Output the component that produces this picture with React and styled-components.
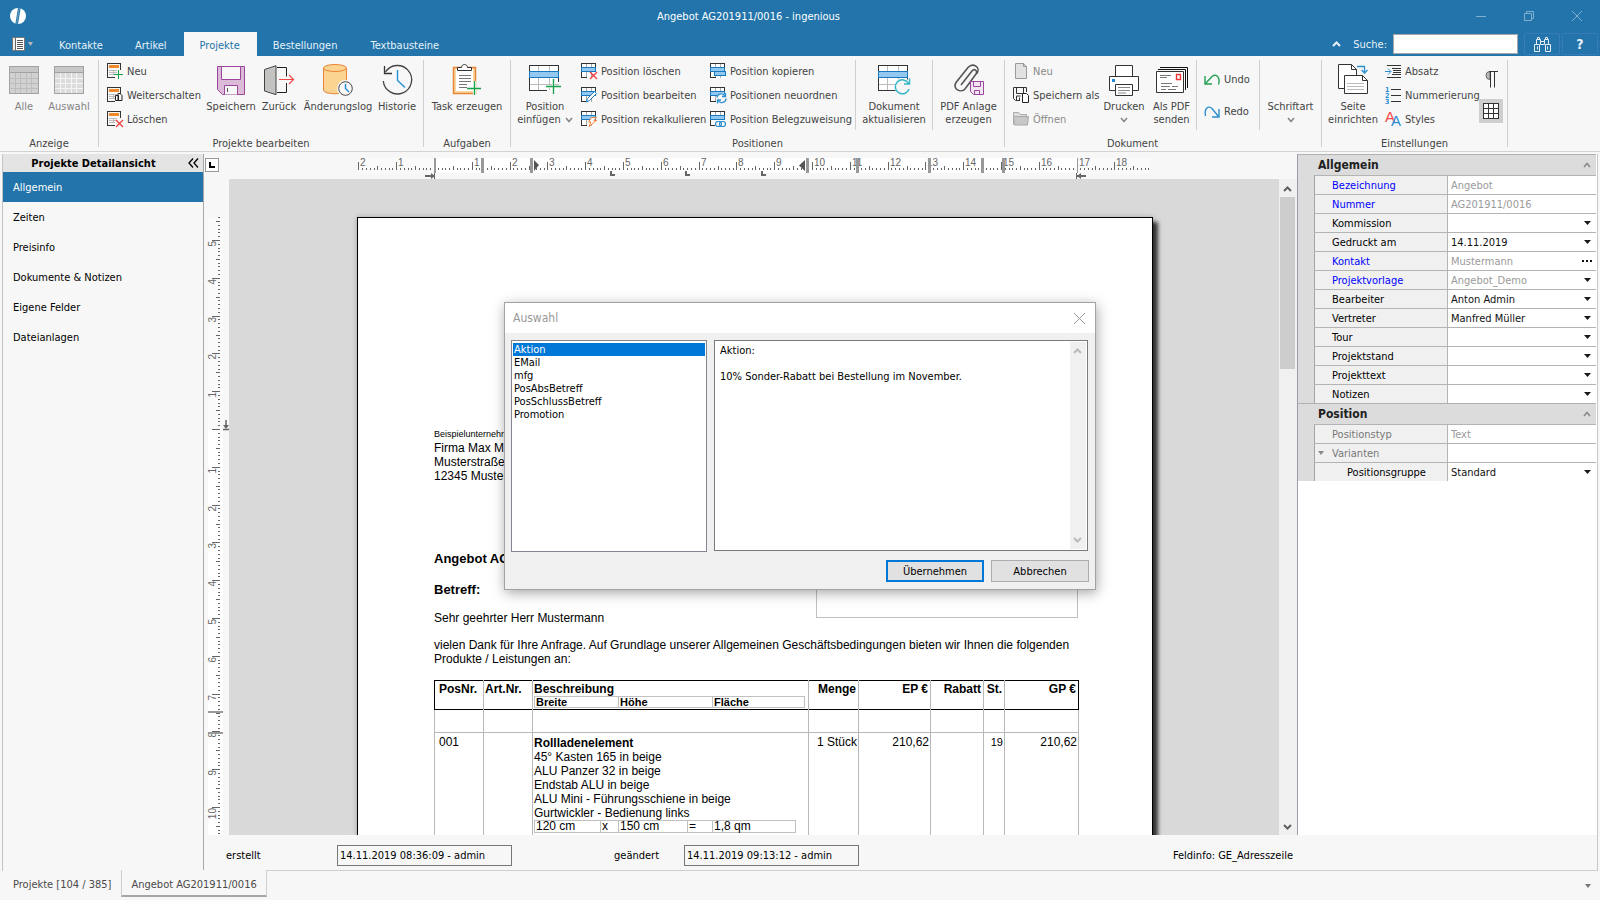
import React from "react";
import styled, { createGlobalStyle } from "styled-components";

const GlobalStyle = createGlobalStyle`
  * {
    box-sizing: border-box;
  }

  body {
    margin: 0;
    background: #f7f7f7;
  }

  body,
  button,
  input,
  select,
  textarea {
    font-family: "DejaVu Sans Condensed", "Noto Sans", sans-serif;
    font-size: 11px;
  }

  button {
    border: 0;
    padding: 0;
    background: none;
    color: inherit;
  }

  svg {
    display: block;
    flex: none;
    overflow: visible;
  }
`;

const Window = styled.div`
  display: flex;
  flex-direction: column;
  height: 100vh;
  overflow: hidden;
  color: #000;
`;

/* ---------- title bar and ribbon tabs ---------- */

const TitleBar = styled.header`
  display: flex;
  align-items: center;
  height: 32px;
  padding: 0 13px 0 10px;
  background: #2274aa;
  color: #fff;

  h1 {
    flex: 1;
    margin: 0;
    padding-left: 28px;
    font-size: 11px;
    font-weight: normal;
    text-align: center;
  }
`;

const WindowButton = styled.button`
  display: grid;
  place-items: center;
  width: 20px;
  height: 20px;
  margin-left: 28px;
  color: #7fb0d0;
`;

const TabBar = styled.nav`
  display: flex;
  align-items: stretch;
  height: 24px;
  padding-right: 2px;
  background: #2274aa;
  color: #fff;
`;

const FileMenu = styled.button`
  display: flex;
  align-items: center;
  gap: 3px;
  width: 43px;
  padding-left: 12px;
`;

const Tab = styled.button`
  padding: 2px 16px 0;
  background: ${(props) => (props.$active ? "#f7f7f7" : "none")};
  color: ${(props) => (props.$active ? "#2274aa" : "#e8f2f8")};

  & + & {
    padding-right: 17px;
  }
`;

const Search = styled.div`
  display: flex;
  align-items: center;
  margin-left: auto;
  color: #e8f2f8;

  label {
    margin: 0 6px 0 12px;
  }

  input {
    width: 125px;
    height: 20px;
    margin-right: 4px;
    border: 1px solid #a8a8a8;
    background: #fff;
  }
`;

const SearchButton = styled.button`
  display: grid;
  place-items: center;
  width: 36px;
  height: 22px;
  margin-left: 2px;
  border: 1px solid #3a7cb8;
  border-radius: 2px;
  font-size: 14px;
  font-weight: bold;
`;

/* ---------- ribbon ---------- */

const Ribbon = styled.div`
  display: flex;
  height: 96px;
  padding-top: 4px;
  border-bottom: 1px solid #d2d2d2;
  background: #f7f7f7;
  color: #444;
`;

const Group = styled.section`
  display: flex;
  flex-direction: column;

  h2 {
    margin: 0;
    font-size: 11px;
    font-weight: normal;
    line-height: 14px;
    text-align: center;
  }
`;

const GroupBody = styled.div`
  display: flex;
  height: 77px;
  padding: 0 ${(props) => props.$end || 0}px 0 ${(props) => props.$start || 0}px;
`;

const Rule = styled.div`
  flex: none;
  width: 1px;
  height: ${(props) => (props.$short ? 70 : 87)}px;
  background: #d0d0d0;
`;

const LargeButton = styled.button`
  display: flex;
  flex-direction: column;
  align-items: center;
  flex: none;
  width: ${(props) => props.$width}px;
  padding-top: 4px;
  line-height: 13px;
  white-space: nowrap;
  opacity: ${(props) => (props.disabled ? 0.65 : 1)};

  .picture {
    display: grid;
    place-items: center;
    height: 32px;
    margin-bottom: 4px;
  }

  .line {
    display: flex;
    align-items: center;
    gap: 4px;
    min-height: 13px;
  }

  .line svg {
    color: #888;
  }
`;

const Stack = styled.div`
  display: flex;
  flex-direction: column;
  gap: ${(props) => props.$gap || 2}px;
  flex: none;
  width: ${(props) => props.$width}px;
  padding-left: ${(props) => props.$start || 0}px;
  padding-top: ${(props) => props.$top || 0}px;
`;

const SmallButton = styled.button`
  display: flex;
  align-items: center;
  gap: 4px;
  height: 22px;
  white-space: nowrap;
  color: ${(props) => (props.disabled ? "#8a8a8a" : "inherit")};
`;

const ToggleButton = styled.button`
  display: grid;
  place-items: center;
  width: 24px;
  height: 24px;
  background: ${(props) => (props.$on ? "#cfcfcf" : "none")};
`;

/* ---------- work area ---------- */

const Workspace = styled.main`
  display: flex;
  flex: 1;
  min-height: 0;
  padding: 2px 2px 0 2px;
`;

const Sidebar = styled.aside`
  flex: none;
  width: 202px;
  border-left: 1px solid #c4c4c4;
  border-right: 1px solid #a8a8a8;

  header {
    display: flex;
    align-items: center;
    height: 18px;
    padding-right: 4px;
    background: #e4e4e4;
  }

  h2 {
    flex: 1;
    margin: 0;
    padding-right: 4px;
    font-size: 11px;
    text-align: center;
  }
`;

const SideItem = styled.button`
  display: block;
  width: 100%;
  height: 30px;
  padding-left: 10px;
  text-align: left;
  background: ${(props) => (props.$active ? "#2274aa" : "none")};
  color: ${(props) => (props.$active ? "#fff" : "#000")};
`;

const Content = styled.div`
  display: flex;
  flex: 1;
  flex-direction: column;
  min-width: 0;
  border-right: 1px solid #c8c8c8;
`;

const Panels = styled.div`
  display: flex;
  flex: 1;
  min-height: 0;
`;

const Editor = styled.section`
  display: grid;
  grid-template-columns: 25px 1fr 18px;
  grid-template-rows: 25px 1fr;
  flex: 1;
  min-width: 0;
  border-right: 1px solid #9a9eaa;
`;

const TabCorner = styled.button`
  display: grid;
  place-items: center;
  width: 14px;
  height: 14px;
  margin: 4px 0 0 1px;
  border: 1px solid #999;
  background: #fff;
`;

const TopRuler = styled.div`
  display: flex;
  justify-content: center;
  grid-column: 2 / 4;
  padding-right: 18px;
  overflow: hidden;
`;

const SideRuler = styled.div`
  padding-top: 38px;
  overflow: hidden;
`;

const Canvas = styled.div`
  display: flex;
  justify-content: center;
  align-items: flex-start;
  padding: 38px 0 0 2px;
  overflow: hidden;
  background: #d9d9d9;
`;

const Scrollbar = styled.div`
  display: flex;
  flex-direction: column;
  align-items: center;
  justify-content: space-between;
  width: ${(props) => (props.$slim ? 16 : 18)}px;
  padding: ${(props) => (props.$slim ? "1px 2px 1px 0" : "2px 2px 0 1px")};
  background: #f0f0f0;

  button {
    display: grid;
    place-items: center;
    width: 100%;
    height: 16px;
    color: ${(props) => (props.$slim ? "#bbb" : "#606060")};
  }

  .thumb {
    width: 100%;
    height: 172px;
    margin-bottom: auto;
    background: #cdcdcd;
  }
`;

const StatusRow = styled.footer`
  display: flex;
  align-items: center;
  height: 36px;
  padding: 5px 304px 0 22px;
  border-bottom: 1px solid #cfcfcf;

  label {
    width: 111px;
  }

  input {
    width: 175px;
    height: 21px;
    margin-right: 102px;
    padding: 0 2px;
    border: 1px solid #777;
    background: #f7f7f7;
  }

  label + input + label {
    width: 70px;
  }

  output {
    margin-left: auto;
  }
`;

/* ---------- document sheet ---------- */

const Sheet = styled.article`
  flex: none;
  width: 796px;
  min-height: 1123px;
  padding: 209px 74px 0 76px;
  border: 1px solid #000;
  background: #fff;
  box-shadow:
    5px 5px 4px rgba(0, 0, 0, 0.75),
    0 0 5px rgba(0, 0, 0, 0.25);
  font-family: "Liberation Sans", Arial, sans-serif;
  font-size: 12px;
  line-height: 14px;

  p {
    margin: 0;
  }

  .sender {
    font-size: 9px;
  }
`;

const LetterHead = styled.div`
  display: grid;
  grid-template-columns: 1fr 262px;
  align-items: end;
  margin: 68px 0 13px;

  h3 {
    margin: 0 0 15px;
    font-size: 13px;
    line-height: 16px;
  }

  h3 + h3 {
    margin-bottom: 13px;
  }
`;

const InfoBox = styled.div`
  height: 60px;
  margin-bottom: 7px;
  border: 1px solid #c0c0c0;
`;

const Positions = styled.table`
  width: 100%;
  margin-top: 14px;
  table-layout: fixed;
  border-collapse: collapse;

  > thead {
    border: 1px solid #000;
  }

  > thead > tr > th,
  > tbody > tr > td {
    padding: 1px 2px 1px 1px;
    border-left: 1px solid #b8b8b8;
    border-right: 1px solid #b8b8b8;
    vertical-align: top;
    text-align: left;
    white-space: nowrap;
  }

  > thead > tr > th:first-child,
  > tbody > tr > td:first-child {
    padding-left: 4px;
  }

  > thead > tr > th:first-child {
    border-left-color: #000;
  }

  > thead > tr > th:last-child {
    border-right-color: #000;
  }

  > thead > tr > th:nth-child(n + 4),
  > tbody > tr > td:nth-child(n + 4) {
    text-align: right;
  }

  > tbody > tr > td {
    padding-top: 2px;
    padding-right: 1px;
  }

  .spacer td {
    height: 23px;
    border-bottom: 1px solid #b8b8b8;
  }

  .item {
    height: 320px;
  }

  .tax {
    font-size: 11px;
  }

  strong {
    display: block;
    padding-top: 1px;
  }
`;

const Measures = styled.table`
  width: ${(props) => props.$width}px;
  table-layout: fixed;
  border-collapse: collapse;
  line-height: 11px;

  th,
  td {
    padding: 0 1px;
    border: 1px solid #c0c0c0;
    text-align: left;
  }

  th {
    border-right: 0;
    font-size: 11px;
    line-height: 10px;
  }

  th:last-child {
    border-right: 1px solid #c0c0c0;
  }
`;

/* ---------- property panel ---------- */

const Properties = styled.aside`
  flex: none;
  width: 299px;
  padding-right: 1px;
  background: #fff;
`;

const PropertyGroup = styled.section`
  padding-left: 16px;
  border-top: 1px solid #b0b0b0;
  background: #dcdcdc;

  header {
    display: flex;
    align-items: center;
    justify-content: space-between;
    height: 20px;
    padding: 0 5px 0 4px;
    color: #8a8a8a;
  }

  h2 {
    margin: 0;
    font-size: 12px;
    color: #222;
  }
`;

const PropertyRow = styled.div`
  display: grid;
  grid-template-columns: 132px 1fr;
  height: 19px;
  border-top: 1px solid #b4b4b4;
  border-left: 1px solid #a4a4a4;
  color: ${(props) => props.$tone || "#000"};

  label {
    display: flex;
    align-items: center;
    padding-left: ${(props) => (props.$nested ? 32 : 17)}px;
    background: #f0f0f0;
  }

  label svg {
    margin: 0 8px 0 -14px;
  }
`;

const Field = styled.div`
  display: grid;
  grid-template-columns: 1fr 18px;
  align-items: center;
  border-left: 1px solid #b4b4b4;
  background: #fff;

  input,
  select {
    grid-area: 1 / 1 / 2 / 3;
    width: 100%;
    height: 17px;
    padding: 0 3px;
    border: 0;
    background: none;
    appearance: none;
    color: ${(props) => (props.$muted ? "#9a9a9a" : "#111")};
    opacity: 1;
  }

  button,
  svg {
    grid-area: 1 / 2;
    justify-self: center;
    pointer-events: none;
  }
`;

/* ---------- dialog ---------- */

const Dialog = styled.div`
  position: absolute;
  top: 302px;
  left: 504px;
  width: 592px;
  border: 1px solid #a2a2a2;
  background: #f0f0f0;
  box-shadow: 1px 3px 12px rgba(0, 0, 0, 0.35);

  header {
    display: flex;
    align-items: center;
    justify-content: space-between;
    height: 30px;
    padding: 0 10px 0 8px;
    background: #fff;
    color: #999;
  }

  h2 {
    margin: 0;
    font-size: 12px;
    font-weight: normal;
  }
`;

const DialogBody = styled.div`
  display: grid;
  grid-template-columns: 196px 1fr;
  gap: 7px;
  height: 212px;
  margin: 7px 7px 0 6px;
`;

const TextList = styled.ul`
  margin: 0;
  padding: 2px 1px;
  border: 1px solid #828790;
  background: #fff;
  list-style: none;

  li {
    height: 13px;
    padding-left: 1px;
    line-height: 13px;
  }

  li[aria-selected="true"] {
    background: #0078d7;
    color: #fff;
  }
`;

const Preview = styled.div`
  display: flex;
  height: 211px;
  padding: 1px;
  border: 1px solid #7a7a7a;
  background: #fff;

  textarea {
    flex: 1;
    padding: 2px 4px;
    border: 0;
    outline: 0;
    resize: none;
    line-height: 13px;
  }
`;

const DialogActions = styled.div`
  display: flex;
  justify-content: flex-end;
  gap: 7px;
  padding: 8px 6px 7px;

  button {
    width: 98px;
    height: 22px;
    border: 1px solid #adadad;
    background: #e1e1e1;
  }

  button:first-child {
    border: 2px solid #0078d7;
  }
`;

/* ---------- bottom tabs ---------- */

const BottomTabs = styled.nav`
  display: flex;
  align-items: flex-start;
  height: 29px;
  padding: 0 9px 0 3px;
  color: #4a4a4a;

  svg {
    margin: 13px 0 0 auto;
  }
`;

const BottomTab = styled.button`
  height: 27px;
  margin-top: -1px;
  padding: 4px 9px 0;
  border: 1px solid ${(props) => (props.$active ? "#cfcfcf" : "transparent")};
  border-top: 0;
  border-bottom: 2px solid ${(props) => (props.$active ? "#a6a6a6" : "transparent")};
  background: ${(props) => (props.$active ? "#f7f7f7" : "none")};
`;

/* ---------- icons ---------- */

const Svg = ({ w = 16, h = w, children, ...rest }) => (
  <svg
    width={w}
    height={h}
    viewBox={`0 0 ${w} ${h}`}
    fill="none"
    aria-hidden="true"
    {...rest}
  >
    {children}
  </svg>
);

const Caret = ({ color = "#1a1a1a", w = 7 }) => (
  <Svg w={w} h={4}>
    <path d={`M0 0H${w}L${w / 2} 4Z`} fill={color} />
  </Svg>
);

const Chevron = ({ up, w = 8, width = 1.6 }) => (
  <Svg w={w} h={6}>
    <path
      d={up ? `M1 5L${w / 2} 1.5L${w - 1} 5` : `M1 1L${w / 2} 4.5L${w - 1} 1`}
      stroke="currentColor"
      strokeWidth={width}
    />
  </Svg>
);

const Cross = ({ size = 10 }) => (
  <Svg w={size}>
    <path d={`M0 0L${size} ${size}M${size} 0L0 ${size}`} stroke="currentColor" />
  </Svg>
);

const Logo = () => (
  <Svg>
    <circle cx="8" cy="8" r="8" fill="#fff" />
    <path d="M9.500 -1L6.500 17" stroke="#2274aa" strokeWidth="2.600" />
    <path d="M9.300 0L6.700 16" stroke="#8fb9d4" strokeWidth=".6" />
  </Svg>
);

const FileIcon = () => (
  <Svg w={13} h={14}>
    <path d="M.5.500h12v13H.5z" fill="#666" stroke="#777" />
    <path d="M4 1h8v12H4z" fill="#fff" />
    <path d="M2 1v12" stroke="#eee" strokeWidth="2" />
    <path d="M5 3.500h6M5 5.500h6M5 7.500h6M5 9.500h6M5 11.500h6" stroke="#555" />
  </Svg>
);

const Binoculars = () => (
  <Svg w={17} h={17}>
    <path
      d="M.5 8.500h5v7h-5zM11.500 8.500h5v7h-5zM2.500 8.500v-5h4v5h4v-5h4v5M3.500 3.500v-2h2v2M11.500 3.500v-2h2v2M6.500 5.500h4M3.500 10.500v3M13.500 10.500v3"
      stroke="#e6eef4"
    />
  </Svg>
);

const GrayGrid = ({ light }) => (
  <Svg w={30} h={28} shapeRendering="crispEdges">
    <path d="M.5.500h29v27H.5z" fill={light ? "#cfcfcf" : "#bdbdbd"} />
    <path d="M1 1h28v6H1z" fill="#b0b0b0" />
    <path
      d="M1 12.500h28M1 17.500h28M1 22.500h28M6.500 7v20M11.500 7v20M17.500 7v20M22.500 7v20"
      stroke={light ? "#f4f4f4" : "#9d9d9d"}
    />
    <path d="M.5.500h29v27H.5zM1 6.500h28" stroke="#767676" />
  </Svg>
);

const FormBase = () => (
  <g shapeRendering="crispEdges">
    <path d="M8 14.500H.5v-14h13V7" stroke="#333" />
    <path d="M2 2h10v3H2z" fill="#f08a28" />
    <path d="M2 7.500h8M2 9.500h8M2 11.500h6M6.500 7v5" stroke="#bbb" />
  </g>
);

const FormNew = () => (
  <Svg>
    <FormBase />
    <path d="M11.500 7v9M7 11.500h9" stroke="#16a34a" shapeRendering="crispEdges" />
  </Svg>
);

const FormForward = () => (
  <Svg>
    <FormBase />
    <path d="M8.500 8.500h3v5h-3zM11 6.500h2l2 2v5h-4z" fill="#f7f7f7" stroke="#222" />
  </Svg>
);

const FormDelete = () => (
  <Svg>
    <FormBase />
    <path d="M9 9l7 7M16 9l-7 7" stroke="#f04040" strokeWidth="1.300" />
  </Svg>
);

const SaveLarge = () => (
  <Svg w={29} h={29}>
    <path d="M.5.500h27v28H5.500l-5-5z" fill="#dcbbd9" stroke="#9c479c" />
    <path d="M4.500.500h19v13h-19zM7.500 28.500v-9h13v9" fill="#f7f7f7" stroke="#9c479c" />
    <path d="M10.500 22v4" stroke="#555" />
  </Svg>
);

const BackIcon = () => (
  <Svg w={30} h={30}>
    <path d="M.5 4.500L12 .7v29L.5 26z" fill="#c3c3c1" stroke="#444" />
    <path d="M13 2.500h9.500v9M22.500 18v9.500H13" stroke="#222" />
    <path d="M15 14.500h14M25 10l4.500 4.500L25 19" stroke="#f04848" strokeWidth="1.200" />
  </Svg>
);

const ChangeLog = () => (
  <Svg w={30} h={32}>
    <path d="M.5 4v22c0 5 23 5 23 0V4" fill="#fbd491" stroke="#e8853a" />
    <ellipse cx="12" cy="4" rx="11.500" ry="3.500" fill="#fbd491" stroke="#e8853a" />
    <circle cx="22.500" cy="24.500" r="8.500" fill="#f7f7f7" />
    <circle cx="22.500" cy="24.500" r="6.800" stroke="#444" />
    <path d="M22.500 20V24.500l3.500 3.500" stroke="#1e88d0" strokeWidth="1.400" />
  </Svg>
);

const History = () => (
  <Svg w={31} h={31}>
    <path d="M3.500 7A14.200 14.200 0 1 1 1.300 16" stroke="#444" strokeWidth="1.300" />
    <path d="M2.500 1v7.500H10" stroke="#333" strokeWidth="1.300" />
    <path d="M15.500 5v10.500l7.500 7" stroke="#2090d8" strokeWidth="1.400" />
  </Svg>
);

const TaskIcon = () => (
  <Svg w={30} h={32}>
    <path d="M1.500 3.500h22v26h-22z" fill="#fbd9a0" stroke="#e8853a" strokeWidth="1.500" />
    <path d="M4 5h17v22H4z" fill="#fff" />
    <path d="M5.500 6.500v-3h4c0-4 6-4 6 0h4v3z" fill="#fff" stroke="#333" />
    <path d="M7 11.500h12M7 14.500h12M7 17.500h12M7 20.500h8M7 23.500h11" stroke="#777" />
    <path d="M22.500 17v14M15 24.500h14" stroke="#f7f7f7" strokeWidth="3" />
    <path d="M22.500 17v14M15 24.500h14" stroke="#16a34a" strokeWidth="1.300" />
  </Svg>
);

const LargeTable = ({ children }) => (
  <Svg w={33} h={30}>
    <g shapeRendering="crispEdges">
      <path d="M.5.500h29v25H.5z" fill="#fff" />
      <path d="M9.500 1v24M20.500 1v24M1 19.500h29" stroke="#bcbcbc" />
      <path d="M30 .5H.5v25H18M29.500.500V17" stroke="#333" />
      <path d="M.5 6.500h29v6H.5z" fill="#93c9f0" stroke="#1878c0" />
    </g>
    {children}
  </Svg>
);

const InsertPosition = () => (
  <LargeTable>
    <path d="M24.500 14v15M17 21.500h15" stroke="#f7f7f7" strokeWidth="3" />
    <path d="M24.500 14v15M17 21.500h15" stroke="#16a34a" strokeWidth="1.300" />
  </LargeTable>
);

const RefreshDocument = () => (
  <LargeTable>
    <circle cx="25" cy="21.500" r="8.500" fill="#f7f7f7" />
    <path
      d="M30.500 18.500A7 7 0 1 0 31 24M31.500 13.500v5.500H26"
      stroke="#35b5c8"
      strokeWidth="1.500"
    />
  </LargeTable>
);

const smallBadges = {
  delete: <path d="M9 9l7 7M16 9l-7 7" stroke="#f04040" strokeWidth="1.400" />,
  edit: <path d="M5.500 15l1-3.500 7-7 2 2-7 7z" fill="#fff" stroke="#1e7fc8" />,
  recalc: (
    <path d="M10.500 6.500h5l-2.500 3h2.500l-7.500 6 2-4.500H7.500z" fill="#fff" stroke="#f08030" />
  ),
  copy: (
    <path
      d="M4.500 8.500h11v4h-11z"
      fill="#93c9f0"
      stroke="#1878c0"
      shapeRendering="crispEdges"
    />
  ),
  reorder: (
    <g stroke="#2a8fd0" strokeWidth="1.300">
      <circle cx="11.500" cy="11" r="5" fill="#f7f7f7" stroke="none" />
      <path d="M7 10.500a4.300 4.300 0 0 1 8-1.500M16 11.500a4.300 4.300 0 0 1-8 2M15.500 6v3.500H12M7.500 16.500V13H11" />
    </g>
  ),
  assign: (
    <g stroke="#2a8fd0" strokeWidth="1.200">
      <path d="M5 9h11v7H5z" fill="#f7f7f7" stroke="none" />
      <rect x="5.500" y="10.500" width="6" height="5" rx="2.500" />
      <rect x="9.500" y="10.500" width="6" height="5" rx="2.500" />
    </g>
  ),
};

const SmallTable = ({ badge }) => (
  <Svg>
    <g shapeRendering="crispEdges">
      <path d="M.5.500h14v14H.5z" fill="#fff" />
      <path d="M5.500 1v14M10.500 1v14" stroke="#aaa" />
      <path d="M15 .5H.5v14H6M14.500.500V8" stroke="#333" />
      <path d="M.5 4.500h14v4H.5z" fill="#93c9f0" stroke="#1878c0" />
    </g>
    {smallBadges[badge]}
  </Svg>
);

const PdfAttach = () => (
  <Svg w={32} h={32}>
    <path
      d="M8 21L19 7c2.500-3 6 0 4 3L12 25c-4 4.500-13 0-9-6.500L15 3.500c5-5.500 13 0 9 6"
      stroke="#555"
      strokeWidth="1.600"
    />
    <path d="M17.500 17.500h13v13h-10l-3-3z" fill="#f3e6f3" stroke="#9c479c" />
    <path d="M20.500 17.500h7v5h-7zM21.500 30.500v-4h5v4" stroke="#9c479c" />
  </Svg>
);

const PageIcon = () => (
  <Svg>
    <path d="M2.500.500h8l3 3v12h-11z" fill="#e2e2e2" stroke="#999" />
    <path d="M10.500.500v3h3" stroke="#999" />
  </Svg>
);

const SaveAs = () => (
  <Svg>
    <path
      d="M7 13.500H2.500l-2-2V.5h13V5M3.500.500v6h7v-6M3.500 13v-4h4M6.500 10.500v3"
      stroke="#333"
    />
    <path d="M9.500 6.500h4l2 2v7h-6z" fill="#fff" stroke="#222" />
  </Svg>
);

const FolderIcon = () => (
  <Svg>
    <path d="M.5 13.500v-12h5l2 2h6v2" fill="#ddd" stroke="#aaa" />
    <path d="M.5 5.500h15l-1 8.500h-13z" fill="#c8c8c8" stroke="#aaa" />
  </Svg>
);

const PrinterIcon = () => (
  <Svg w={30} h={31}>
    <path d="M6.500 12V.5h17V12" fill="#fff" stroke="#333" />
    <path d="M.5 11.500h29v14H.5z" fill="#fff" stroke="#333" />
    <path d="M6.500 19.500h17v11h-17z" fill="#fff" stroke="#333" />
    <path d="M9 22.500h12M9 25.500h12M9 28h8" stroke="#888" />
    <path d="M3 14h3v3H3z" fill="#1e88d0" />
  </Svg>
);

const MailPdf = () => (
  <Svg w={32} h={26}>
    <path d="M4 .5h27.500V21M2 2.500h27.500V23" stroke="#111" />
    <path d="M.5 4.500h27v21H.5z" fill="#fff" stroke="#333" />
    <path d="M20.500 7.500h4v5h-4z" stroke="#f03838" strokeWidth="1.400" />
    <path
      d="M4 8.500h11M4 10.500h7M5 16.500h11M5 19.500h9M16 19.500h6M5 22.500h5M12 22.500h8"
      stroke="#777"
    />
  </Svg>
);

const Undo = () => (
  <Svg>
    <path d="M1 5v8h7" stroke="#22a052" strokeWidth="1.400" />
    <path d="M1.500 12.500L8 5.500c5-3.500 8.500 2 6.500 8" stroke="#22a052" strokeWidth="1.400" />
  </Svg>
);

const Redo = () => (
  <Svg>
    <path d="M15 6v8H8" stroke="#2a8fd0" strokeWidth="1.400" />
    <path d="M14.500 13.500L8 5.500c-4-3.500-8 .5-6.500 7.500" stroke="#2a8fd0" strokeWidth="1.400" />
  </Svg>
);

const PageSetup = () => (
  <Svg w={31} h={32}>
    <path d="M6 24.500H.5V.5h13l5 5V11" fill="#fff" stroke="#333" />
    <path d="M13.500.500v5h5" stroke="#333" />
    <path d="M6.500 11.500h18l5 5v13h-23z" fill="#fff" stroke="#333" />
    <path d="M24.500 11.500v5h5" stroke="#333" />
    <path d="M9 19.500h17M9 22.500h17M9 25.500h17" stroke="#bbb" />
    <path d="M19 2.500h7.500V9M23.500 6l3 3 3-3" stroke="#2a8fd0" strokeWidth="1.300" />
  </Svg>
);

const Paragraph = () => (
  <Svg>
    <path
      d="M2 2.500h14M7 5.500h9M8 7.500h8M8 9.500h8M7 11.500h9M2 14.500h14"
      stroke="#333"
    />
    <path d="M0 8.500h5.500M3 5.500l3 3-3 3" stroke="#2a8fd0" />
  </Svg>
);

const Numbering = () => (
  <Svg>
    <path d="M6 2.500h10M6 8.500h10M6 14.500h10" stroke="#333" />
    <g fill="#2a8fd0" fontSize="7" fontWeight="bold">
      <text x="0" y="5">
        1
      </text>
      <text x="0" y="11">
        2
      </text>
      <text x="0" y="17">
        3
      </text>
    </g>
  </Svg>
);

const Styles = () => (
  <Svg>
    <g fontFamily="Liberation Sans" fontSize="15">
      <text x="0" y="11" fill="#f04848">
        A
      </text>
      <text x="6" y="15" fill="#2a8fd0">
        A
      </text>
    </g>
  </Svg>
);

const Pilcrow = () => (
  <Svg w={13} h={17}>
    <path d="M5 .5a4 4 0 0 0 0 8z" fill="#bbb" stroke="#666" />
    <path d="M4 .5h9M5.500.500v16M9.500.500v16" stroke="#333" />
  </Svg>
);

const GridIcon = () => (
  <Svg>
    <path
      d="M.5.500h15v15H.5zM5.500 1v14M10.500 1v14M1 5.500h14M1 10.500h14"
      fill="#fff"
      stroke="#333"
      shapeRendering="crispEdges"
    />
  </Svg>
);

/* ---------- rulers ---------- */

const CM = 37.8;

const rulerTicks = (from, to) => {
  const ticks = [];
  for (let mm = from; mm <= to; mm += 1) {
    const size = mm % 10 === 0 ? 8 : mm % 5 === 0 ? 4 : 2;
    ticks.push({ mm, size });
  }
  return ticks;
};

const HorizontalRuler = () => {
  const zero = 77;
  const at = (mm) => Math.round(zero + (mm * CM) / 10);
  return (
    <Svg w={794} h={25}>
      <path d="M0 4h794v15H0z" fill="#fafafa" />
      <path d="M77 4h643v15H77z" fill="#fff" />
      <g shapeRendering="crispEdges" fill="#666">
        {rulerTicks(-20, 189).map(({ mm, size }) => (
          <rect key={mm} x={at(mm)} y={16 - size} width="1" height={size} />
        ))}
      </g>
      <g fill="#666" fontFamily="Liberation Sans" fontSize="10">
        {[-2, -1, 1, 2, 3, 4, 5, 6, 7, 8, 9, 10, 11, 12, 13, 14, 15, 16, 17, 18].map(
          (n) => (
            <text key={n} x={at(n * 10) + 2} y="12">
              {Math.abs(n)}
            </text>
          )
        )}
      </g>
      <g fill="#999" shapeRendering="crispEdges">
        <path d="M77 4h2v15h-2zM720 4h1v15h-1z" />
        {[125, 174, 450, 500, 572, 625, 646].map((x) => (
          <rect key={x} x={x - 1} y="4" width="3" height="15" />
        ))}
      </g>
      <path d="M177 6l5 5h-5zM177 11h5l-5 6zM448 6v11l-6-5.500z" fill="#555" />
      <path
        d="M254 17v4h4M329 17v4h4M405 17v4h4M68 22h8M720 22h9"
        stroke="#666"
        strokeWidth="2"
      />
      <path d="M74 19l4 3-4 3zM724 19l-4 3 4 3z" fill="#666" />
      <path d="M77.500 19v6M719.500 19v6" stroke="#666" />
    </Svg>
  );
};

const VerticalRuler = () => {
  const zero = 212;
  const at = (mm) => Math.round(zero + (mm * CM) / 10);
  return (
    <Svg w={25} h={640}>
      <path d="M4 1h15v640H4z" fill="#fafafa" />
      <path d="M4 212h15v428H4z" fill="#fff" />
      <g shapeRendering="crispEdges" fill="#666">
        {rulerTicks(-56, 112).map(({ mm, size }) => (
          <rect key={mm} x={16 - size} y={at(mm)} width={size} height="1" />
        ))}
      </g>
      <g fill="#666" fontFamily="Liberation Sans" fontSize="10">
        {[-5, -4, -3, -2, -1, 1, 2, 3, 4, 5, 6, 7, 8, 9, 10].map((n) => (
          <text
            key={n}
            transform={`translate(12 ${at(n * 10) + 1}) rotate(-90)`}
            textAnchor="end"
          >
            {Math.abs(n)}
          </text>
        ))}
      </g>
      <path d="M4 494h15v2H4zM4 515h15v2H4z" fill="#999" />
      <path d="M19 212.500h6M22 203v7" stroke="#666" strokeWidth="1.500" />
      <path d="M19 208h6l-3 4z" fill="#666" />
    </Svg>
  );
};

/* ---------- data ---------- */

const LINK = "#0000ff";
const GRAY = "#777";

const generalFields = [
  { label: "Bezeichnung", value: "Angebot", tone: LINK, muted: true },
  { label: "Nummer", value: "AG201911/0016", tone: LINK, muted: true },
  { label: "Kommission", kind: "select" },
  { label: "Gedruckt am", value: "14.11.2019", kind: "select" },
  { label: "Kontakt", value: "Mustermann", tone: LINK, muted: true, kind: "browse" },
  { label: "Projektvorlage", value: "Angebot_Demo", tone: LINK, muted: true, kind: "select" },
  { label: "Bearbeiter", value: "Anton Admin", kind: "select" },
  { label: "Vertreter", value: "Manfred Müller", kind: "select" },
  { label: "Tour", kind: "select" },
  { label: "Projektstand", kind: "select" },
  { label: "Projekttext", kind: "select" },
  { label: "Notizen", kind: "select" },
];

const positionFields = [
  { label: "Positionstyp", value: "Text", tone: GRAY, muted: true },
  { label: "Varianten", tone: GRAY, open: true },
  { label: "Positionsgruppe", value: "Standard", kind: "select", nested: true },
];

const textBlocks = [
  "Aktion",
  "EMail",
  "mfg",
  "PosAbsBetreff",
  "PosSchlussBetreff",
  "Promotion",
];

/* ---------- parts ---------- */

function Large({ icon, lines, width, menu, disabled }) {
  return (
    <LargeButton $width={width} disabled={disabled}>
      <span className="picture">{icon}</span>
      {lines.map((line, index) => (
        <span className="line" key={line}>
          {line}
          {menu === "inline" && index === lines.length - 1 && <Chevron />}
        </span>
      ))}
      {menu === "below" && (
        <span className="line">
          <Chevron />
        </span>
      )}
    </LargeButton>
  );
}

function Small({ icon, children, disabled }) {
  return (
    <SmallButton disabled={disabled}>
      {icon}
      {children}
    </SmallButton>
  );
}

function RibbonBar() {
  return (
    <Ribbon>
      <Group>
        <GroupBody $start={2} $end={6}>
          <Large icon={<GrayGrid />} lines={["Alle"]} width={44} disabled />
          <Large icon={<GrayGrid light />} lines={["Auswahl"]} width={46} disabled />
        </GroupBody>
        <h2>Anzeige</h2>
      </Group>
      <Rule />
      <Group>
        <GroupBody $end={3}>
          <Stack $width={107} $start={8}>
            <Small icon={<FormNew />}>Neu</Small>
            <Small icon={<FormForward />}>Weiterschalten</Small>
            <Small icon={<FormDelete />}>Löschen</Small>
          </Stack>
          <Large icon={<SaveLarge />} lines={["Speichern"]} width={50} />
          <Large icon={<BackIcon />} lines={["Zurück"]} width={46} />
          <Large icon={<ChangeLog />} lines={["Änderungslog"]} width={72} />
          <Large icon={<History />} lines={["Historie"]} width={46} />
        </GroupBody>
        <h2>Projekte bearbeiten</h2>
      </Group>
      <Rule />
      <Group>
        <GroupBody>
          <Large icon={<TaskIcon />} lines={["Task erzeugen"]} width={86} />
        </GroupBody>
        <h2>Aufgaben</h2>
      </Group>
      <Rule />
      <Group>
        <GroupBody>
          <Large
            icon={<InsertPosition />}
            lines={["Position", "einfügen"]}
            width={68}
            menu="inline"
          />
          <Stack $width={129} $start={2}>
            <Small icon={<SmallTable badge="delete" />}>Position löschen</Small>
            <Small icon={<SmallTable badge="edit" />}>Position bearbeiten</Small>
            <Small icon={<SmallTable badge="recalc" />}>Position rekalkulieren</Small>
          </Stack>
          <Stack $width={147} $start={2}>
            <Small icon={<SmallTable badge="copy" />}>Position kopieren</Small>
            <Small icon={<SmallTable badge="reorder" />}>Positionen neuordnen</Small>
            <Small icon={<SmallTable badge="assign" />}>Position Belegzuweisung</Small>
          </Stack>
          <Rule $short />
          <Large icon={<RefreshDocument />} lines={["Dokument", "aktualisieren"]} width={76} />
          <Rule $short />
          <Large icon={<PdfAttach />} lines={["PDF Anlage", "erzeugen"]} width={71} />
        </GroupBody>
        <h2>Positionen</h2>
      </Group>
      <Rule />
      <Group>
        <GroupBody>
          <Stack $width={96} $start={8}>
            <Small icon={<PageIcon />} disabled>
              Neu
            </Small>
            <Small icon={<SaveAs />}>Speichern als</Small>
            <Small icon={<FolderIcon />} disabled>
              Öffnen
            </Small>
          </Stack>
          <Large icon={<PrinterIcon />} lines={["Drucken"]} width={46} menu="below" />
          <Large icon={<MailPdf />} lines={["Als PDF", "senden"]} width={49} />
          <Rule $short />
          <Stack $width={62} $start={7} $top={8} $gap={10}>
            <Small icon={<Undo />}>Undo</Small>
            <Small icon={<Redo />}>Redo</Small>
          </Stack>
          <Rule $short />
        </GroupBody>
        <h2>Dokument</h2>
      </Group>
      <Group>
        <GroupBody>
          <Large lines={["Schriftart"]} width={61} menu="below" />
        </GroupBody>
      </Group>
      <Rule />
      <Group>
        <GroupBody>
          <Large icon={<PageSetup />} lines={["Seite", "einrichten"]} width={62} />
          <Stack $width={95} $start={1}>
            <Small icon={<Paragraph />}>Absatz</Small>
            <Small icon={<Numbering />}>Nummerierung</Small>
            <Small icon={<Styles />}>Styles</Small>
          </Stack>
          <Stack $width={28} $top={7} $gap={8}>
            <ToggleButton aria-label="Formatierungszeichen">
              <Pilcrow />
            </ToggleButton>
            <ToggleButton $on aria-label="Rasterlinien">
              <GridIcon />
            </ToggleButton>
          </Stack>
        </GroupBody>
        <h2>Einstellungen</h2>
      </Group>
      <Rule />
    </Ribbon>
  );
}

function Property({ field }) {
  const { label, value = "", tone, muted, kind, nested, open } = field;
  const id = label.toLowerCase().replace(/\s/g, "-");
  return (
    <PropertyRow $tone={tone} $nested={nested}>
      <label htmlFor={id}>
        {open && <Caret color="#888" w={6} />}
        {label}
      </label>
      <Field $muted={muted}>
        {kind === "select" ? (
          <select id={id} defaultValue={value}>
            <option value={value}>{value}</option>
          </select>
        ) : (
          <input id={id} defaultValue={value} readOnly={muted} />
        )}
        {kind === "select" && <Caret />}
        {kind === "browse" && (
          <button aria-label="Kontakt wählen">
            <Svg w={10} h={2}>
              <path d="M0 0h2v2H0zM4 0h2v2H4zM8 0h2v2H8z" fill="#111" />
            </Svg>
          </button>
        )}
      </Field>
    </PropertyRow>
  );
}

function PropertyPanel({ title, fields }) {
  return (
    <PropertyGroup>
      <header>
        <h2>{title}</h2>
        <Chevron up />
      </header>
      {fields.map((field) => (
        <Property key={field.label} field={field} />
      ))}
    </PropertyGroup>
  );
}

function Offer() {
  return (
    <Sheet>
      <p className="sender">Beispielunternehmen</p>
      <p>Firma Max Mustermann</p>
      <p>Musterstraße</p>
      <p>12345 Musterstadt</p>
      <LetterHead>
        <div>
          <h3>Angebot AG201911/0016</h3>
          <h3>Betreff:</h3>
          <p>Sehr geehrter Herr Mustermann</p>
        </div>
        <InfoBox />
      </LetterHead>
      <p>
        vielen Dank für Ihre Anfrage. Auf Grundlage unserer Allgemeinen
        Geschäftsbedingungen bieten wir Ihnen die folgenden
        <br />
        Produkte / Leistungen an:
      </p>
      <Positions>
        <colgroup>
          {[49, 49, 276, 50, 72, 53, 21, 74].map((width, index) => (
            <col key={index} width={width} />
          ))}
        </colgroup>
        <thead>
          <tr>
            <th>PosNr.</th>
            <th>Art.Nr.</th>
            <th>
              Beschreibung
              <Measures $width={271}>
                <colgroup>
                  <col width="84" />
                  <col width="94" />
                  <col />
                </colgroup>
                <tbody>
                  <tr>
                    <th>Breite</th>
                    <th>Höhe</th>
                    <th>Fläche</th>
                  </tr>
                </tbody>
              </Measures>
            </th>
            <th>Menge</th>
            <th>EP €</th>
            <th>Rabatt</th>
            <th>St.</th>
            <th>GP €</th>
          </tr>
        </thead>
        <tbody>
          <tr className="spacer">
            <td />
            <td />
            <td />
            <td />
            <td />
            <td />
            <td />
            <td />
          </tr>
          <tr className="item">
            <td>001</td>
            <td />
            <td>
              <strong>Rollladenelement</strong>
              45° Kasten 165 in beige
              <br />
              ALU Panzer 32 in beige
              <br />
              Endstab ALU in beige
              <br />
              ALU Mini - Führungsschiene in beige
              <br />
              Gurtwickler - Bedienung links
              <Measures $width={262}>
                <colgroup>
                  <col width="66" />
                  <col width="18" />
                  <col width="69" />
                  <col width="25" />
                  <col />
                </colgroup>
                <tbody>
                  <tr>
                    <td>120 cm</td>
                    <td>x</td>
                    <td>150 cm</td>
                    <td>=</td>
                    <td>1,8 qm</td>
                  </tr>
                </tbody>
              </Measures>
            </td>
            <td>1 Stück</td>
            <td>210,62</td>
            <td />
            <td className="tax">19</td>
            <td>210,62</td>
          </tr>
        </tbody>
      </Positions>
    </Sheet>
  );
}

function SelectionDialog() {
  return (
    <Dialog role="dialog" aria-labelledby="dialog-title">
      <header>
        <h2 id="dialog-title">Auswahl</h2>
        <button aria-label="Schließen">
          <Cross size={11} />
        </button>
      </header>
      <DialogBody>
        <TextList role="listbox" aria-label="Textbausteine">
          {textBlocks.map((name, index) => (
            <li key={name} role="option" aria-selected={index === 0}>
              {name}
            </li>
          ))}
        </TextList>
        <Preview>
          <textarea
            aria-label="Vorschau"
            readOnly
            value={"Aktion:\n\n10% Sonder-Rabatt bei Bestellung im November."}
          />
          <Scrollbar $slim>
            <button aria-label="Vorschau nach oben">
              <Chevron up w={9} width={2} />
            </button>
            <button aria-label="Vorschau nach unten">
              <Chevron w={9} width={2} />
            </button>
          </Scrollbar>
        </Preview>
      </DialogBody>
      <DialogActions>
        <button>Übernehmen</button>
        <button>Abbrechen</button>
      </DialogActions>
    </Dialog>
  );
}

function App() {
  return (
    <Window>
      <GlobalStyle />
      <TitleBar>
        <Logo />
        <h1>Angebot AG201911/0016 - ingenious</h1>
        <WindowButton aria-label="Minimieren">
          <Svg w={10}>
            <path d="M0 5.500h10" stroke="currentColor" />
          </Svg>
        </WindowButton>
        <WindowButton aria-label="Wiederherstellen">
          <Svg w={10}>
            <path d="M.5 2.500h7v7h-7zM2.500 2.500v-2h7v7h-2" stroke="currentColor" />
          </Svg>
        </WindowButton>
        <WindowButton aria-label="Schließen">
          <Cross />
        </WindowButton>
      </TitleBar>
      <TabBar>
        <FileMenu aria-label="Datei">
          <FileIcon />
          <Caret color="#b8b8b8" w={5} />
        </FileMenu>
        <Tab>Kontakte</Tab>
        <Tab>Artikel</Tab>
        <Tab $active>Projekte</Tab>
        <Tab>Bestellungen</Tab>
        <Tab>Textbausteine</Tab>
        <Search>
          <button aria-label="Menüband reduzieren">
            <Chevron up w={9} width={2} />
          </button>
          <label htmlFor="search">Suche:</label>
          <input id="search" />
          <SearchButton aria-label="Suchen">
            <Binoculars />
          </SearchButton>
          <SearchButton>?</SearchButton>
        </Search>
      </TabBar>
      <RibbonBar />
      <Workspace>
        <Sidebar>
          <header>
            <h2>Projekte Detailansicht</h2>
            <button aria-label="Einklappen">
              <Svg w={11} h={10}>
                <path
                  d="M5 .5L1 5l4 4.500M10 .5L6 5l4 4.500"
                  stroke="#000"
                  strokeWidth="1.300"
                />
              </Svg>
            </button>
          </header>
          <SideItem $active>Allgemein</SideItem>
          <SideItem>Zeiten</SideItem>
          <SideItem>Preisinfo</SideItem>
          <SideItem>Dokumente &amp; Notizen</SideItem>
          <SideItem>Eigene Felder</SideItem>
          <SideItem>Dateianlagen</SideItem>
        </Sidebar>
        <Content>
          <Panels>
            <Editor>
              <TabCorner aria-label="Tabulator">
                <Svg w={6}>
                  <path d="M1 0v5h5" stroke="#000" strokeWidth="2" />
                </Svg>
              </TabCorner>
              <TopRuler>
                <HorizontalRuler />
              </TopRuler>
              <SideRuler>
                <VerticalRuler />
              </SideRuler>
              <Canvas>
                <Offer />
              </Canvas>
              <Scrollbar>
                <button aria-label="Nach oben">
                  <Chevron up w={9} width={2} />
                </button>
                <div className="thumb" />
                <button aria-label="Nach unten">
                  <Chevron w={9} width={2} />
                </button>
              </Scrollbar>
            </Editor>
            <Properties>
              <PropertyPanel title="Allgemein" fields={generalFields} />
              <PropertyPanel title="Position" fields={positionFields} />
            </Properties>
          </Panels>
          <StatusRow>
            <label htmlFor="created">erstellt</label>
            <input id="created" readOnly value="14.11.2019 08:36:09 - admin" />
            <label htmlFor="changed">geändert</label>
            <input id="changed" readOnly value="14.11.2019 09:13:12 - admin" />
            <output>Feldinfo: GE_Adresszeile</output>
          </StatusRow>
        </Content>
      </Workspace>
      <BottomTabs>
        <BottomTab>Projekte [104 / 385]</BottomTab>
        <BottomTab $active>Angebot AG201911/0016</BottomTab>
        <Caret color="#777" w={6} />
      </BottomTabs>
      <SelectionDialog />
    </Window>
  );
}

export default App;
